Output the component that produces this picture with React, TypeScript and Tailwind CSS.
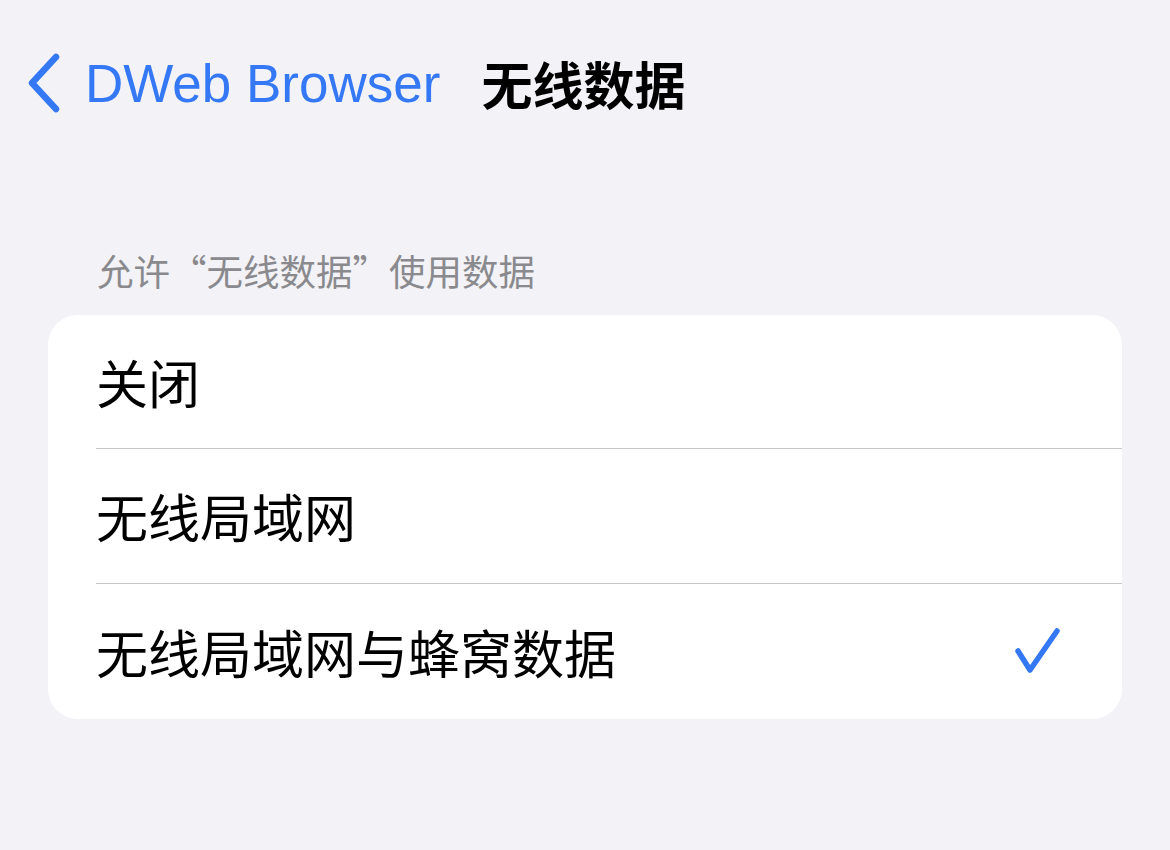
import React from "react";

const cjk = '"Noto Sans CJK SC", "Noto Sans", sans-serif';

function Row({ label, checked, last, h }: { label: string; checked?: boolean; last?: boolean; h: string }) {
  return (
    <div className={"flex pl-[48px] " + h}>
      <div className={"flex flex-1 items-center justify-between pr-[60px] " + (last ? "" : "border-b border-[#c8c8cc]")}>
        <span className="text-[52px] leading-none text-black" style={{ fontFamily: cjk }}>{label}</span>
        {checked && (
          <svg width="48" height="50" viewBox="0 0 48 50" fill="none">
            <path d="M4 24 L16 43 L43 4" stroke="#3478f6" strokeWidth="5.5" strokeLinecap="round" strokeLinejoin="round" />
          </svg>
        )}
      </div>
    </div>
  );
}

export default function App() {
  return (
    <div className="min-h-[850px] w-full bg-[#f2f2f7]">
      <div className="flex h-[166px] items-center pl-[24px]">
        <svg width="40" height="60" viewBox="0 0 40 60" fill="none" className="mr-[21px]">
          <path d="M32 4 L8 30 L32 56" stroke="#3478f6" strokeWidth="6.5" strokeLinecap="round" strokeLinejoin="round" />
        </svg>
        <span className="text-[53px] leading-none text-[#3478f6]" style={{ fontFamily: '"Liberation Sans", Arial, sans-serif' }}>
          DWeb Browser
        </span>
        <span className="ml-[41px] text-[51px] font-bold leading-none text-black" style={{ fontFamily: cjk }}>
          无线数据
        </span>
      </div>
      <div className="pl-[97px] pt-[83px] pb-[22px] text-[36.5px] leading-[44px] text-[#8a8a8e]" style={{ fontFamily: cjk }}>
        允许“无线数据”使用数据
      </div>
      <div className="mx-[48px] overflow-hidden rounded-[30px] bg-white">
        <Row label="关闭" h="h-[134px]" />
        <Row label="无线局域网" h="h-[135px]" />
        <Row label="无线局域网与蜂窝数据" h="h-[135px]" checked last />
      </div>
    </div>
  );
}
